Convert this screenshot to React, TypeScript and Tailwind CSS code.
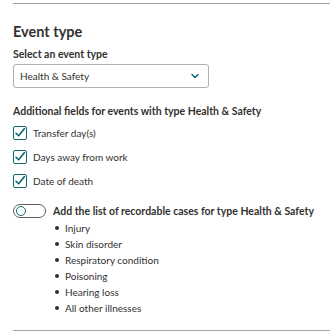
import { ChevronDown } from 'lucide-react';

const FONT = "font-['Segoe_UI','Lato',sans-serif]";

const fields = ['Transfer day(s)', 'Days away from work', 'Date of death'];
const cases = ['Injury', 'Skin disorder', 'Respiratory condition', 'Poisoning', 'Hearing loss', 'All other illnesses'];

function Check() {
  return (
    <span className="flex h-[14px] w-[14px] items-center justify-center rounded-[2px] border-[1.5px] border-[#0f6b6b]">
      <svg width="12" height="12" viewBox="0 0 12 12" fill="none" aria-hidden="true">
        <path d="M2 6.2l2.6 2.6L10.5 1.5" stroke="#0f6b6b" strokeWidth="1.6" strokeLinecap="round" strokeLinejoin="round" />
      </svg>
    </span>
  );
}

export default function App() {
  return (
    <div className={`${FONT} h-[335px] w-[330px] overflow-hidden bg-white pl-[13px] pt-[3px] text-[#323130]`}>
      <div className="border-t border-[#a3a3a3]" />

      <h2 className="mt-[18px] text-[14.5px] font-bold leading-5">Event type</h2>

      <p className="mt-[4px] text-[10.5px] font-bold leading-4">Select an event type</p>
      <div className="mt-[2px] flex h-[24px] w-[196px] items-center justify-between rounded-[3px] border border-[#b0b0b0] pl-[6px] pr-[7px] text-[10px]">
        <span>Health &amp; Safety</span>
        <ChevronDown size={12} strokeWidth={3} color="#0f6b6b" />
      </div>

      <p className="mt-[15px] text-[10.5px] font-bold leading-4">Additional fields for events with type Health &amp; Safety</p>
      <div className="mt-[7px] flex flex-col gap-[10px]">
        {fields.map((f) => (
          <label key={f} className="flex h-[14px] items-center gap-[6px] text-[10px]">
            <Check />
            <span>{f}</span>
          </label>
        ))}
      </div>

      <div className="mt-[15px] flex gap-[7px]">
        <span className="mt-[1px] flex h-[14px] w-[33px] shrink-0 items-center rounded-full border border-[#605e5c] px-[2px]">
          <span className="h-[10px] w-[10px] rounded-full border-[1.5px] border-[#0f6b6b]" />
        </span>
        <div>
          <p className="whitespace-nowrap text-[10.5px] font-bold leading-4">Add the list of recordable cases for type Health &amp; Safety</p>
          <ul className="mt-[1px] flex flex-col">
            {cases.map((c) => (
              <li key={c} className="flex h-[16px] items-center gap-[6px] pl-[2px] text-[10px]">
                <span className="h-[4px] w-[4px] rounded-full bg-[#323130]" />
                {c}
              </li>
            ))}
          </ul>
        </div>
      </div>

      <div className="mt-[14px] border-t border-[#a3a3a3]" />
    </div>
  );
}
